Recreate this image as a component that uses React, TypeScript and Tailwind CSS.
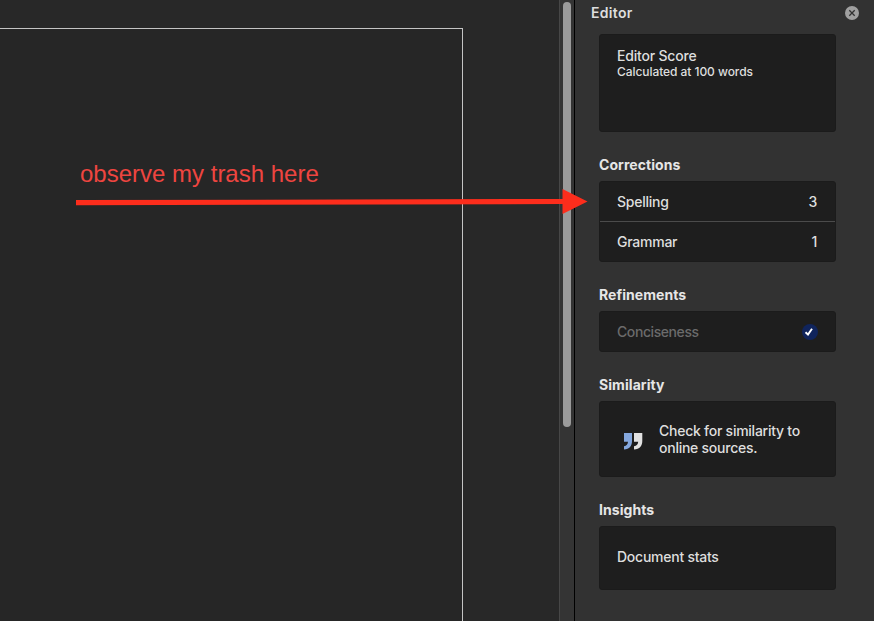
import type { ReactNode } from 'react';

function Heading({ children }: { children: ReactNode }) {
  return <h2 className="h-5 text-[14px] font-bold leading-5 tracking-[0.06px] text-[#e6e6e6]">{children}</h2>;
}

function Card({ className, children }: { className: string; children: ReactNode }) {
  return <div className={`rounded-[3px] border border-[#1b1b1b] bg-[#1e1e1e] ${className}`}>{children}</div>;
}

function DocumentArea() {
  return (
    <main className="relative w-[559px] shrink-0 bg-[#282828] pt-7">
      <div className="h-[593px] w-[463px] border-r border-t border-[#c4c4c4] bg-[#262626] pl-20 pt-[130px]">
        <p className="whitespace-nowrap font-['Liberation_Sans',Arial,sans-serif] text-[24px] leading-[30px] text-[#ee4540]">
          observe my trash here
        </p>
      </div>
      <svg className="absolute left-[70px] top-[180px] z-10" width="525" height="44" viewBox="70 180 525 44">
        <path d="M76 200 L563 199 V204 L76 205.2Z" fill="#fd2d1c" />
        <path d="M562.5 189 L587.5 201.5 L562.5 214Z" fill="#fd2d1c" />
      </svg>
    </main>
  );
}

function EditorPanel() {
  return (
    <aside className="w-[299px] shrink-0 bg-[#323232] pl-6 text-[14px] font-[450] tracking-[-0.25px] text-[#dedede]">
      <header className="flex h-[34px] items-start justify-between pr-[15px]">
        <h1 className="-ml-2 mt-[3px] text-[14px] font-semibold leading-5 tracking-[0.3px]">Editor</h1>
        <svg className="mt-[6px]" width="14" height="14" viewBox="0 0 14 14">
          <circle cx="7" cy="7" r="7" fill="#a0a0a0" />
          <path d="M4.3 4.3 9.7 9.7M9.7 4.3 4.3 9.7" stroke="#323232" strokeWidth="1.3" />
        </svg>
      </header>
      <div className="w-[237px]">
        <Card className="h-[98px] px-[17px] pt-[13px]">
          <p className="leading-4 tracking-[-0.2px]">Editor Score</p>
          <p className="text-[12px] leading-4 tracking-[-0.06px]">Calculated at 100 words</p>
        </Card>
        <section className="mt-[23px]">
          <Heading>Corrections</Heading>
          <Card className="mt-[6px] h-[81px]">
            <div className="flex h-10 items-center justify-between border-b border-[#4b4b4b] pl-[17px] pr-[18px]">
              <span>Spelling</span>
              <span>3</span>
            </div>
            <div className="flex h-[38px] items-center justify-between pl-[17px] pr-[18px]">
              <span>Grammar</span>
              <span>1</span>
            </div>
          </Card>
        </section>
        <section className="mt-[23px]">
          <Heading>Refinements</Heading>
          <Card className="mt-[6px] flex h-[41px] items-center justify-between px-[17px] text-[#6b6b6b]">
            <span className="tracking-[-0.42px]">Conciseness</span>
            <svg width="16" height="16" viewBox="0 0 16 16">
              <circle cx="8" cy="8" r="8" fill="#10245c" />
              <path d="M3.5 8.2 6 10.5 10 4.7" fill="none" stroke="#fff" strokeWidth="1.9" />
            </svg>
          </Card>
        </section>
        <section className="mt-[23px]">
          <Heading>Similarity</Heading>
          <Card className="mt-[6px] flex h-[76px] items-center pl-[23px]">
            <svg className="mt-[4px]" width="20" height="17" viewBox="0 0 20 17">
              <path d="M1 0H9V8C9 13 6.500 16 1 16.500V13.300C3.600 12.800 4.800 11.400 5 8.700H1Z" fill="#84a7de" />
              <path d="M11 0H19.300V8C19.300 13 16.700 16 11 16.500V13.300C13.800 12.800 15 11.400 15.200 8.700H11Z" fill="#e2e2e2" />
            </svg>
            <p className="ml-4 leading-[17px]">
              Check for similarity to
              <br />
              online sources.
            </p>
          </Card>
        </section>
        <section className="mt-[23px]">
          <Heading>Insights</Heading>
          <Card className="mt-[6px] flex h-16 items-center px-[17px] pb-[3px]">
            <span>Document stats</span>
          </Card>
        </section>
      </div>
    </aside>
  );
}

export default function App() {
  return (
    <div className="flex h-[621px] w-[874px] overflow-hidden bg-[#282828] font-['Inter',sans-serif]">
      <DocumentArea />
      <div className="flex w-4 shrink-0 justify-center border-l border-r border-l-[#474747] border-r-black bg-[#343434] pt-[2px]">
        <div className="h-[425px] w-2 rounded-full bg-[#9b9b9b]" />
      </div>
      <EditorPanel />
    </div>
  );
}
